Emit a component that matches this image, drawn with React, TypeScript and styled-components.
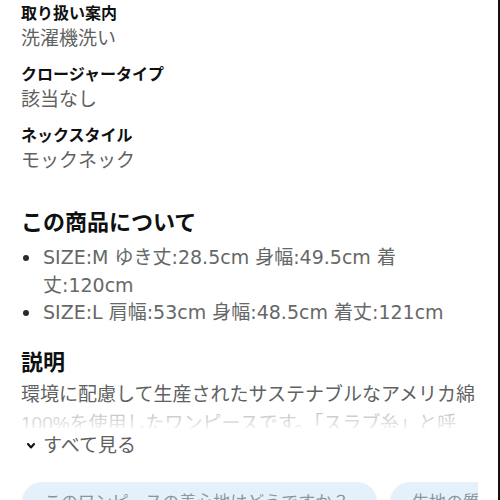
import React from "react";
import styled, { createGlobalStyle } from "styled-components";

const Global = createGlobalStyle`
  html, body { margin: 0; padding: 0; background: #fff; }
  body { font-family: "Liberation Sans", "Noto Sans CJK JP", sans-serif; color: #0f1111; }
  * { box-sizing: border-box; }
`;

const Page = styled.div`
  width: 500px;
  height: 500px;
  overflow: hidden;
  border-right: 2px solid #111;
  display: flex;
  flex-direction: column;
  padding: 3px 20px 0 21px;
  & > * { flex-shrink: 0; }
`;

const DetailList = styled.dl`
  margin: 0;
  display: flex;
  flex-direction: column;
  gap: 12px;
`;

const DetailItem = styled.div`
  display: flex;
  flex-direction: column;
`;

const Label = styled.dt`
  font-size: 16px;
  line-height: 22px;
  font-weight: 700;
  color: #0f1111;
`;

const Value = styled.dd`
  margin: 0;
  font-size: 19px;
  line-height: 27px;
  color: #5f6262;
`;

const Heading = styled.h2<{ $top: number }>`
  margin: ${(p) => p.$top}px 0 0 0;
  font-size: 22px;
  line-height: 30px;
  font-weight: 700;
  color: #0f1111;
`;

const Bullets = styled.ul`
  margin: 6px 0 0 0;
  padding: 0;
  list-style: none;
  display: flex;
  flex-direction: column;
`;

const Bullet = styled.li`
  position: relative;
  padding-left: 22px;
  font-family: "DejaVu Sans", "Noto Sans CJK JP", sans-serif;
  font-size: 19px;
  line-height: 27.5px;
  color: #666868;
  &::before {
    content: "";
    position: absolute;
    left: 2px;
    top: 11px;
    width: 6px;
    height: 6px;
    border-radius: 50%;
    background: #2a2a2a;
  }
`;

const Description = styled.div`
  position: relative;
  margin-top: 2px;
  height: 48px;
  overflow: hidden;
  font-size: 19px;
  line-height: 29px;
  color: #5f6262;
  white-space: nowrap;
  &::after {
    content: "";
    position: absolute;
    left: 0;
    right: 0;
    top: 29px;
    bottom: 0;
    background: linear-gradient(rgba(255,255,255,0.55), rgba(255,255,255,0.9));
  }
`;

const SeeMore = styled.div`
  display: flex;
  align-items: center;
  gap: 8px;
  margin-top: 5px;
  padding-left: 6px;
  font-size: 19px;
  line-height: 26px;
  color: #5f6262;
`;

const PillRow = styled.div`
  display: flex;
  gap: 13px;
  margin-top: 23px;
  overflow: hidden;
  margin-left: 1px;
`;

const Pill = styled.div<{ $w: number }>`
  flex: 0 0 ${(p) => p.$w}px;
  height: 44px;
  border-radius: 20px;
  background: #e4f1fb;
  padding: 9px 0 0 22px;
  font-size: 17px;
  line-height: 24px;
  color: #8a96a0;
  white-space: nowrap;
  overflow: hidden;
`;

const details = [
  { label: "取り扱い案内", value: "洗濯機洗い" },
  { label: "クロージャータイプ", value: "該当なし" },
  { label: "ネックスタイル", value: "モックネック" },
];

export default function App() {
  return (
    <>
      <Global />
      <Page>
        <DetailList>
          {details.map((d) => (
            <DetailItem key={d.label}>
              <Label>{d.label}</Label>
              <Value>{d.value}</Value>
            </DetailItem>
          ))}
        </DetailList>
        <Heading $top={34}>この商品について</Heading>
        <Bullets>
          <Bullet>SIZE:M ゆき丈:28.5cm 身幅:49.5cm 着丈:120cm</Bullet>
          <Bullet>SIZE:L 肩幅:53cm 身幅:48.5cm 着丈:121cm</Bullet>
        </Bullets>
        <Heading $top={21}>説明</Heading>
        <Description>
          環境に配慮して生産されたサステナブルなアメリカ綿
          <br />
          100%を使用したワンピースです。「スラブ糸」と呼
        </Description>
        <SeeMore>
          <svg width="8" height="6" viewBox="0 0 8 6">
            <polyline points="1,1 4,4.5 7,1" fill="none" stroke="#0f1111" strokeWidth="2" strokeLinecap="round" strokeLinejoin="round" />
          </svg>
          すべて見る
        </SeeMore>
        <PillRow>
          <Pill $w={355}>このワンピースの着心地はどうですか？</Pill>
          <Pill $w={120}>生地の質感は</Pill>
        </PillRow>
      </Page>
    </>
  );
}
